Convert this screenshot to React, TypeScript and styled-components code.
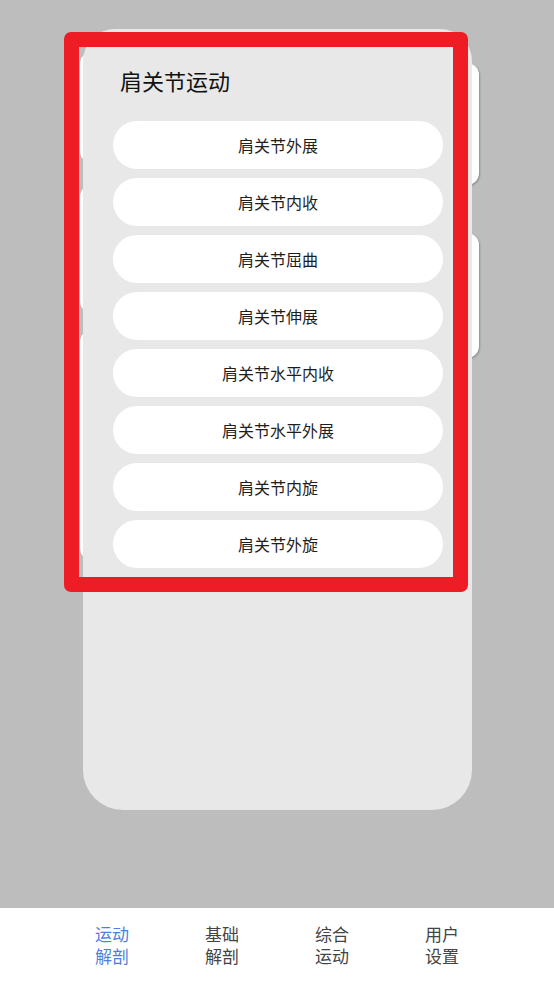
import React from "react";
import styled, { createGlobalStyle } from "styled-components";

const moves = [
  "肩关节外展",
  "肩关节内收",
  "肩关节屈曲",
  "肩关节伸展",
  "肩关节水平内收",
  "肩关节水平外展",
  "肩关节内旋",
  "肩关节外旋",
];

const tabs = [
  { top: "运动", bottom: "解剖", active: true },
  { top: "基础", bottom: "解剖", active: false },
  { top: "综合", bottom: "运动", active: false },
  { top: "用户", bottom: "设置", active: false },
];

// cards of the deck that peek out behind the open one
const backCards = [
  { side: "left", top: 23, height: 111 },
  { side: "left", top: 156, height: 128 },
  { side: "left", top: 301, height: 230 },
  { side: "right", top: 34, height: 122 },
  { side: "right", top: 204, height: 125 },
];

function App() {
  return (
    <>
      <GlobalStyle />
      <Page>
        <Stage>
          <Deck>
            {backCards.map((c, i) => (
              <BackCard key={i} side={c.side} style={{ top: c.top, height: c.height }} />
            ))}
            <Panel>
              <Title>肩关节运动</Title>
              <MoveList>
                {moves.map((m) => (
                  <MoveButton key={m}>{m}</MoveButton>
                ))}
              </MoveList>
            </Panel>
          </Deck>
          <Highlight />
        </Stage>
        <TabBar>
          {tabs.map((t) => (
            <TabItem key={t.top} active={t.active}>
              <TabLine>{t.top}</TabLine>
              <TabLine>{t.bottom}</TabLine>
            </TabItem>
          ))}
        </TabBar>
      </Page>
    </>
  );
}

const GlobalStyle = createGlobalStyle`
  html, body {
    margin: 0;
    padding: 0;
    background: #bdbdbd;
    font-family: "Noto Sans CJK SC", "Noto Sans", sans-serif;
  }
`;

const Page = styled.div`
  width: 554px;
  height: 985px;
  display: flex;
  flex-direction: column;
  background: #bdbdbd;
  overflow: hidden;
`;

const Stage = styled.div`
  position: relative;
  height: 908px;
  padding: 29px 0 0 83px;
  box-sizing: border-box;
`;

const Deck = styled.div`
  position: relative;
  width: 389px;
  height: 781px;
`;

const BackCard = styled.div<{ side: string }>`
  position: absolute;
  width: 200px;
  background: #ffffff;
  border-radius: 12px;
  ${(p) =>
    p.side === "right"
      ? "right: -7px; box-shadow: 1px 1px 2px rgba(0,0,0,0.25);"
      : "left: -3px;"}
`;

const Panel = styled.div`
  position: relative;
  height: 100%;
  background: #e8e8e8;
  border-radius: 32px 32px 40px 40px;
  padding: 38px 29px 0 30px;
  box-sizing: border-box;
  display: flex;
  flex-direction: column;
`;

const Title = styled.div`
  font-size: 22px;
  line-height: 26px;
  color: #111;
  padding-left: 7px;
  margin-bottom: 28px;
`;

const MoveList = styled.div`
  display: flex;
  flex-direction: column;
  gap: 9px;
`;

const MoveButton = styled.div`
  height: 48px;
  border-radius: 24px;
  background: #ffffff;
  display: flex;
  align-items: center;
  justify-content: center;
  font-size: 16px;
  color: #1e1e1e;
`;

const Highlight = styled.div`
  position: absolute;
  left: 64px;
  top: 32px;
  width: 404px;
  height: 560px;
  box-sizing: border-box;
  border: 15px solid #ee1c25;
  border-radius: 7px;
  pointer-events: none;
`;

const TabBar = styled.div`
  height: 77px;
  padding-bottom: 3px;
  box-sizing: border-box;
  background: #ffffff;
  display: flex;
  justify-content: center;
  align-items: center;
`;

const TabItem = styled.div<{ active: boolean }>`
  width: 110px;
  display: flex;
  flex-direction: column;
  align-items: center;
  font-size: 17px;
  color: ${(p) => (p.active ? "#4f7fd9" : "#444444")};
`;

const TabLine = styled.span`
  display: block;
  height: 22px;
  line-height: 22px;
  overflow: visible;
`;

export default App;
